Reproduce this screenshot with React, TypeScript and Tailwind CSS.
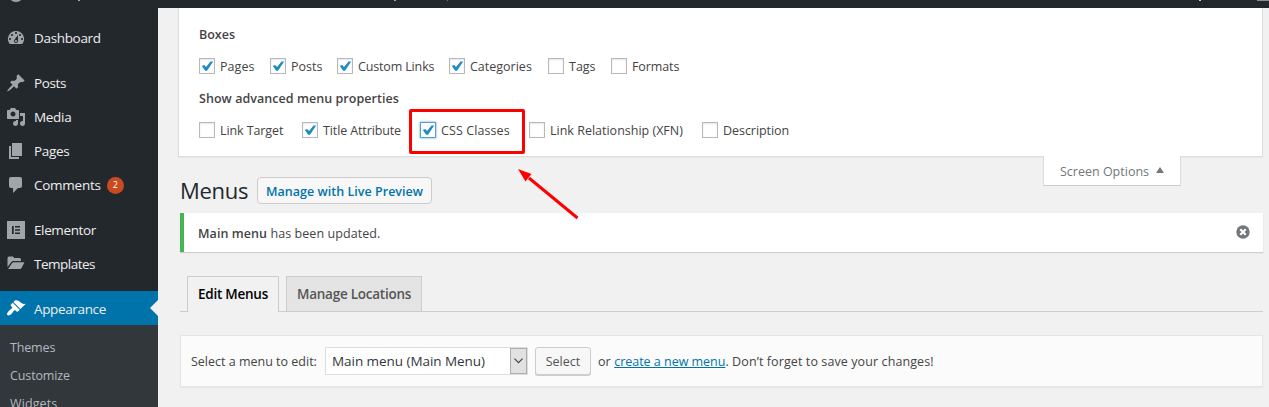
import React from "react";

type Check = { label: string; checked?: boolean; focus?: boolean; box: string; text: string };

const boxes: Check[] = [
  { label: "Pages", checked: true, box: "w-[71px]", text: "tracking-[0.05px]" },
  { label: "Posts", checked: true, box: "w-[67px]", text: "" },
  { label: "Custom Links", checked: true, box: "w-[112px]", text: "-tracking-[0.15px]" },
  { label: "Categories", checked: true, box: "w-[99px]", text: "" },
  { label: "Tags", box: "w-[63px]", text: "" },
  { label: "Formats", box: "w-[90px]", text: "-tracking-[0.1px]" },
];

const advanced: Check[] = [
  { label: "Link Target", box: "w-[103px]", text: "-tracking-[0.1px]" },
  { label: "Title Attribute", checked: true, box: "w-[118px]", text: "-tracking-[0.12px]" },
  { label: "CSS Classes", checked: true, focus: true, box: "w-[109px]", text: "tracking-[0.1px]" },
  { label: "Link Relationship (XFN)", box: "w-[173px]", text: "" },
  { label: "Description", box: "w-[100px]", text: "-tracking-[0.05px]" },
];

function Checkbox({ label, checked, focus, box, text }: Check) {
  return (
    <label className={`flex shrink-0 items-center whitespace-nowrap ${box}`}>
      <span
        className={`-mt-0.5 flex size-4 shrink-0 items-center justify-center border bg-white ${
          focus
            ? "border-[#5b9dd9] shadow-[0_0_2px_rgba(30,140,190,0.8)]"
            : "border-[#b4b9be] shadow-[inset_0_1px_2px_rgba(0,0,0,0.1)]"
        }`}
      >
        {checked && (
          <svg viewBox="0 0 14 14" className="size-3.5 shrink-0">
            <path d="M1.800 7 4.300 5.900 6 7.900 10.600 2.600 13.200 2.600 7 11.800 5.200 11.800Z" fill="#1e8cbe" />
          </svg>
        )}
      </span>
      <span className={`ml-[5px] ${text}`}>{label}</span>
    </label>
  );
}

function SideItem({ label, icon, text, children }: { label: string; icon: React.ReactNode; text: string; children?: React.ReactNode }) {
  return (
    <div className="flex h-[34px] shrink-0 items-center pl-1.5 text-[13.5px] text-[#eee]">
      <span className="flex size-5 shrink-0 items-center justify-center text-[#a0a5aa]">{icon}</span>
      <span className={`ml-2 pt-px ${text}`}>{label}</span>
      {children}
    </div>
  );
}

const iconClass = "size-5 fill-current";

const Dashboard = () => (
  <svg viewBox="0 0 20 20" className={iconClass}>
    <path
      fillRule="evenodd"
      d="M3.76 16h12.48A7.998 7.998 0 0 0 10 3a7.998 7.998 0 0 0-6.24 13zM10 4c.55 0 1 .45 1 1s-.45 1-1 1-1-.45-1-1 .45-1 1-1zM6 6c.55 0 1 .45 1 1s-.45 1-1 1-1-.45-1-1 .45-1 1-1zm8 0c.55 0 1 .45 1 1s-.45 1-1 1-1-.45-1-1 .45-1 1-1zm-5.370 5.550L12 7v6c0 1.100-.9 2-2 2s-2-.9-2-2c0-.57.240-1.080.63-1.450zM4 10c.55 0 1 .45 1 1s-.45 1-1 1-1-.45-1-1 .45-1 1-1zm12 0c.55 0 1 .45 1 1s-.45 1-1 1-1-.45-1-1 .45-1 1-1zm-5 3c0-.55-.45-1-1-1s-1 .45-1 1 .45 1 1 1 1-.45 1-1z"
    />
  </svg>
);
const Pin = () => (
  <svg viewBox="0 0 20 20" className={iconClass}>
    <path d="M10.440 3.020l1.820-1.820 6.360 6.350-1.830 1.820c-1.050-.68-2.480-.57-3.410.36l-.75.75c-.92.93-1.040 2.350-.35 3.410l-1.830 1.820-2.410-2.410-2.800 2.790c-.42.42-3.380 2.710-3.800 2.290s1.860-3.390 2.280-3.810l2.790-2.790L4.100 9.360l1.830-1.820c1.050.69 2.480.57 3.400-.36l.75-.75c.93-.92 1.050-2.350.36-3.410z" />
  </svg>
);
const Media = () => (
  <svg viewBox="0 0 20 20" className={iconClass}>
    <path
      fillRule="evenodd"
      d="M13 11V4c0-.55-.45-1-1-1h-1.670L9 1H5L3.670 3H2c-.55 0-1 .45-1 1v7c0 .55.45 1 1 1h10c.55 0 1-.45 1-1zM7 4.500c1.380 0 2.500 1.120 2.500 2.500S8.380 9.500 7 9.500 4.500 8.380 4.500 7 5.620 4.500 7 4.500zM14 6h5v10.500c0 1.380-1.120 2.500-2.500 2.500S14 17.880 14 16.500s1.120-2.500 2.500-2.500c.17 0 .34.020.5.050V9h-3V6zm-4 8.050V13h2v3.500c0 1.380-1.120 2.500-2.500 2.500S7 17.880 7 16.500 8.120 14 9.500 14c.17 0 .34.020.5.050z"
    />
  </svg>
);
const Pages = () => (
  <svg viewBox="0 0 20 20" className={iconClass}>
    <path d="M6 15V2h10v13H6zm-1 1h8v2H3V5h2v11z" />
  </svg>
);
const Comment = () => (
  <svg viewBox="0 0 20 20" className={iconClass}>
    <path d="M5 2h9c1.100 0 2 .9 2 2v7c0 1.100-.9 2-2 2h-2l-5 5v-5H5c-1.100 0-2-.9-2-2V4c0-1.100.9-2 2-2z" />
  </svg>
);
const Elementor = () => (
  <svg viewBox="0 0 20 20" className={iconClass}>
    <path fillRule="evenodd" d="M1 1H19V19H1ZM6 6V14H7.700V6ZM9 6V7.500H14V6ZM9 9.250V10.750H14V9.250ZM9 12.500V14H14V12.500Z" />
  </svg>
);
const Folder = () => (
  <svg viewBox="0 0 20 20" className={iconClass}>
    <path d="M1.500 13V4.500Q1.500 2.500 3 2.500H6.500Q8 2.500 8 4H13.500Q15 4 15 5.500V7H7.500Q6 7 5.200 8.200ZM2 15 6.200 9Q6.700 8.200 7.700 8.200H18.500L15.500 13.900Q15 15 13.900 15Z" />
  </svg>
);
const Brush = () => (
  <svg viewBox="0 0 20 20" className={`${iconClass} text-white`}>
    <path d="M14.480 11.060L7.410 3.990l1.500-1.500c.5-.56 2.300-.47 3.510.32 1.210.8 1.430 1.280 2.910 2.100 1.180.64 2.450 1.260 4.450.85zm-.71.71L6.700 4.700 4.930 6.470c-.39.39-.39 1.020 0 1.410l1.060 1.060c.39.39.39 1.030 0 1.420-.6.6-1.430 1.110-2.210 1.690-.35.26-.7.53-1.010.84C1.430 14.230.4 16.080 1.400 17.070c.99 1 2.840-.03 4.180-1.360.31-.31.58-.66.850-1.020.57-.78 1.080-1.610 1.690-2.210.39-.39 1.020-.39 1.410 0l1.060 1.060c.39.39 1.020.39 1.410 0z" />
  </svg>
);

function TopBar() {
  return (
    <header className="relative h-2 shrink-0 overflow-hidden bg-[#23282d]">
      <span className="absolute left-2 -top-3.5 size-4 rounded-full border-2 border-[#a0a5aa]" />
      <span className="absolute left-[78px] top-0 h-px w-0.5 bg-[#aaa]" />
      <span className="absolute left-[394px] top-0 h-px w-0.5 bg-[#aaa]" />
      <span className="absolute left-[447px] top-0 h-px w-px bg-[#6670a0]" />
      <span className="absolute left-[1199px] top-0 h-px w-0.5 bg-[#ccc]" />
      <span className="absolute left-[1257px] top-0 h-px w-3 bg-[#8a8f94]" />
    </header>
  );
}

function Sidebar() {
  return (
    <nav className="relative flex w-[158px] shrink-0 flex-col bg-[#23282d] pt-[13px]">
      <SideItem label="Dashboard" icon={<Dashboard />} text="-tracking-[0.33px]" />
      <div className="h-[11px] shrink-0" />
      <SideItem label="Posts" icon={<Pin />} text="-tracking-[0.4px]" />
      <SideItem label="Media" icon={<Media />} text="-tracking-[0.3px]" />
      <SideItem label="Pages" icon={<Pages />} text="-tracking-[0.3px]" />
      <SideItem label="Comments" icon={<Comment />} text="-tracking-[0.25px]">
        <span className="ml-1.5 flex size-[17px] items-center justify-center rounded-full bg-[#ca4a1f] text-[9px] text-white">2</span>
      </SideItem>
      <div className="h-[11px] shrink-0" />
      <SideItem label="Elementor" icon={<Elementor />} text="-tracking-[0.38px]" />
      <SideItem label="Templates" icon={<Folder />} text="-tracking-[0.5px]" />
      <div className="h-2.5 shrink-0" />
      <div className="relative shrink-0 bg-[#0073aa]">
        <SideItem label="Appearance" icon={<Brush />} text="-tracking-[0.36px] relative top-px" />
        <svg viewBox="0 0 8 16" className="absolute right-0 top-[9px] h-4 w-2">
          <path d="M8 0 0 8 8 16Z" fill="#f1f1f1" />
        </svg>
      </div>
      <div className="flex min-h-0 flex-1 flex-col overflow-hidden bg-[#32373c] pl-2.5 pt-[9px] text-[12.5px] leading-7 text-[#b4b9be]">
        <span className="-tracking-[0.15px]">Themes</span>
        <span className="-tracking-[0.12px]">Customize</span>
        <span className="tracking-[0.1px]">Widgets</span>
      </div>
    </nav>
  );
}

export default function App() {
  return (
    <div className="relative flex h-[407px] w-[1269px] flex-col overflow-hidden bg-[#f1f1f1] font-['Open_Sans',sans-serif] text-[12.5px] text-[#444]">
      <TopBar />
      <div className="flex min-h-0 flex-1">
        <Sidebar />
        <main className="w-[1111px] pl-[22px] pr-1.5">
          <section className="-ml-0.5 h-[149px] border border-t-0 border-[#ddd] bg-white pl-5 pt-[17px] shadow-[0_1px_1px_rgba(0,0,0,0.03)]">
            <h2 className="h-5 font-semibold leading-5">Boxes</h2>
            <div className="mt-3 flex h-5 items-center">
              {boxes.map((b) => <Checkbox key={b.label} {...b} />)}
            </div>
            <h2 className="mt-3 h-5 font-semibold leading-5 tracking-[0.05px]">Show advanced menu properties</h2>
            <div className="mt-3 flex h-5 items-center">
              {advanced.map((b) => <Checkbox key={b.label} {...b} />)}
            </div>
          </section>
          <div className="flex h-14 items-start">
            <h1 className="mt-[17px] w-[77px] text-[22px] leading-8 -tracking-[0.3px] text-[#23282d]">Menus</h1>
            <button className="mt-5 h-[27px] w-[175px] whitespace-nowrap rounded-sm border border-[#ccc] bg-[#f7f7f7] pt-[3px] font-semibold tracking-[0.03px] text-[#0073aa]">Manage with Live Preview</button>
            <button className="-mt-px ml-[611px] flex h-[30px] w-[138px] items-center border border-t-0 border-[#ddd] border-b-[#ccc] bg-white pl-4 text-[#72777c]">
              <span className="whitespace-nowrap pt-[3px]">Screen Options</span>
              <svg viewBox="0 0 8 6" className="-mt-px ml-[7px] h-1.5 w-2"><path d="M4 0 8 6H0Z" fill="#72777c" /></svg>
            </button>
          </div>
          <div className="flex h-[39px] items-center border-l-4 border-[#46b450] bg-white pl-3.5 pr-[13px] shadow-[0_1px_1px_rgba(0,0,0,0.15)]">
            <p className="pt-[3px] tracking-[0.07px]"><b className="font-semibold">Main menu</b> has been updated.</p>
            <svg viewBox="0 0 14 14" className="-mt-0.5 ml-auto size-3.5">
              <circle cx="7" cy="7" r="6.7" fill="#72777c" />
              <path d="M4.300 4.300 9.700 9.700M9.700 4.300 4.300 9.700" stroke="white" strokeWidth="2.200" />
            </svg>
          </div>
          <div className="mt-6 flex h-9 border-b border-[#ccc] pl-[7px] text-[13.5px] font-semibold">
            <div className="h-9 w-[92px] whitespace-nowrap border border-b-0 border-[#ccc] bg-[#f1f1f1] pl-2.5 leading-[35px] -tracking-[0.25px] text-black">Edit Menus</div>
            <div className="ml-[7px] h-[35px] w-[136px] whitespace-nowrap border border-b-0 border-[#ccc] bg-[#e4e4e4] pl-2.5 leading-[35px] -tracking-[0.25px] text-[#555]">Manage Locations</div>
          </div>
          <div className="mt-[23px] flex h-[52px] items-center whitespace-nowrap border border-[#e5e5e5] bg-[#fbfbfb] pl-2.5 shadow-[0_1px_1px_rgba(0,0,0,0.04)]">
            <span className="w-[134px] pt-0.5">Select a menu to edit:</span>
            <div className="flex h-7 w-[203px] items-center border border-[#ddd] bg-white pl-1.5 text-[13.5px] text-[#32373c]">
              <span className="-tracking-[0.05px]">Main menu (Main Menu)</span>
              <span className="ml-auto flex h-[26px] w-[17px] items-center justify-center border border-[#adadad] bg-[#e1e1e1]">
                <svg viewBox="0 0 9 6" className="h-1.5 w-[9px]"><path d="M.5.700 4.500 4.700 8.500.700" fill="none" stroke="#444" strokeWidth="1.200" /></svg>
              </span>
            </div>
            <button className="ml-[7px] h-7 w-14 rounded-[3px] border border-[#ccc] bg-[#f7f7f7] pt-0.5 text-[#555] shadow-[0_1px_0_#ccc]">Select</button>
            <span className="ml-[7px] pt-0.5 tracking-[0.1px]">or <a className="-tracking-[0.02px] text-[#0073aa] underline">create a new menu</a>. Don’t forget to save your changes!</span>
          </div>
        </main>
      </div>
      <div className="absolute left-[409px] top-[109px] h-[45px] w-[116px] rounded-[2px] border-3 border-[#f00]" />
      <svg viewBox="0 0 62 54" className="absolute left-[517px] top-[167px] h-[54px] w-[62px]">
        <path d="M12 11 60.500 51" stroke="#f00" strokeWidth="3" />
        <path d="M1 2 14.500 7 8.500 14.500Z" fill="#f00" />
      </svg>
    </div>
  );
}
